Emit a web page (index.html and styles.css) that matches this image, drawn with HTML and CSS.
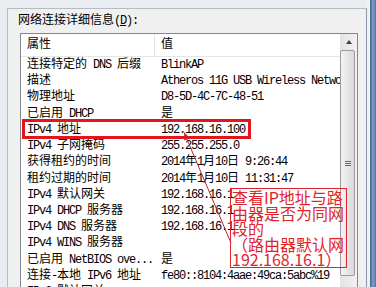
FILE: index.html
```html
<!DOCTYPE html>
<html lang="zh-CN">

<head>
    <meta charset="UTF-8">
    <title>网络连接详细信息</title>
    <link rel="stylesheet" href="styles.css">
</head>

<body>
    <div class="window">
        <div class="panel">
            <div class="title">网络连接详细信息<span class="en">(<u>D</u>):</span></div>
            <div class="listbox">
                <div class="list">
                    <div class="head">
                        <div class="hcell">属性</div>
                        <div class="hcell">值</div>
                    </div>
                    <div class="row"><div class="k">连接特定的<span class="en"> DNS </span>后缀</div><div class="v">BlinkAP</div></div>
                    <div class="row"><div class="k">描述</div><div class="v">Atheros 11G USB Wireless Network Adapter</div></div>
                    <div class="row"><div class="k">物理地址</div><div class="v">D8-5D-4C-7C-48-51</div></div>
                    <div class="row"><div class="k">已启用<span class="en"> DHCP</span></div><div class="v"><span class="cn">是</span></div></div>
                    <div class="row"><div class="k"><span class="en">IPv4 </span>地址</div><div class="v">192.168.16.100</div></div>
                    <div class="row"><div class="k"><span class="en">IPv4 </span>子网掩码</div><div class="v">255.255.255.0</div></div>
                    <div class="row"><div class="k">获得租约的时间</div><div class="v">2014<span class="cn">年</span>1<span class="cn">月</span>10<span class="cn">日</span> 9:26:44</div></div>
                    <div class="row"><div class="k">租约过期的时间</div><div class="v">2014<span class="cn">年</span>1<span class="cn">月</span>10<span class="cn">日</span> 11:31:47</div></div>
                    <div class="row"><div class="k"><span class="en">IPv4 </span>默认网关</div><div class="v">192.168.16.1</div></div>
                    <div class="row"><div class="k"><span class="en">IPv4 DHCP </span>服务器</div><div class="v">192.168.16.1</div></div>
                    <div class="row"><div class="k"><span class="en">IPv4 DNS </span>服务器</div><div class="v">192.168.16.1</div></div>
                    <div class="row"><div class="k"><span class="en">IPv4 WINS </span>服务器</div><div class="v"></div></div>
                    <div class="row"><div class="k">已启用<span class="en"> NetBIOS ove...</span></div><div class="v"><span class="cn">是</span></div></div>
                    <div class="row"><div class="k">连接<span class="en">-</span>本地<span class="en"> IPv6 </span>地址</div><div class="v">fe80::8104:4aae:49ca:5abc%19</div></div>
                    <div class="row"><div class="k"><span class="en">IPv6 </span>默认网关</div><div class="v"></div></div>
                </div>
                <div class="scrollbar">
                    <div class="btn"><span class="up"></span></div>
                    <div class="thumb"><span class="grip"></span></div>
                </div>
            </div>
        </div>
        <div class="edge"></div>

        <svg class="marks" width="376" height="287" viewBox="0 0 376 287">
            <rect x="23.5" y="120.5" width="226" height="17" fill="none" stroke="#e3161d" stroke-width="3" />
            <line x1="186" y1="137" x2="231" y2="243" stroke="#b8262c" stroke-width="1" />
            <polygon points="184,132 189.9,138.2 184.3,140.6" fill="#c8242a" />
        </svg>
        <div class="note">查看IP地址与路<br>由器是否为同网<br>段的<br>（路由器默认网<br>192.168.16.1）</div>
    </div>
</body>

</html>
```

FILE: styles.css
```css
body {
    margin: 0;
    font-family: "Liberation Mono", "Noto Sans CJK SC", monospace;
    font-size: 12px;
    color: #000;
}

.window {
    position: relative;
    display: flex;
    width: 376px;
    height: 287px;
    overflow: hidden;
    background: #e9edf1;
}

.panel {
    flex: 1;
    margin: 8px 0 0 7px;
    padding-top: 4px;
    background: #f0f0f0;
    border-top: 1px solid #b4bcc6;
    border-left: 1px solid #b4bcc6;
    border-right: 1px solid #8e98a4;
}

.edge {
    width: 9px;
    background: linear-gradient(90deg, #eef1f4 0, #eef1f4 3px, #3e5f8c 3px, #7f9fc8 6px, #4f73a3 9px);
}

.en {
    letter-spacing: -1.2px;
}

.cn {
    letter-spacing: 0;
}

.title {
    padding-left: 10px;
    line-height: 16px;
}

.listbox {
    display: flex;
    height: 300px;
    margin: 4px 8px 0 12px;
    background: #fff;
    border: 1px solid #828790;
}

.list {
    flex: 1;
    min-width: 0;
}

.head {
    display: grid;
    grid-template-columns: 133px 1fr;
    height: 22px;
    border-bottom: 1px solid #e5e5e5;
}

.hcell {
    padding-left: 6px;
    line-height: 22px;
}

.hcell + .hcell {
    border-left: 1px solid #e5e5e5;
}

.row {
    display: grid;
    grid-template-columns: 133px 1fr;
    height: 16.23px;
    line-height: 16.23px;
    white-space: nowrap;
}

.k {
    padding-left: 6px;
    overflow: hidden;
}

.v {
    padding-left: 7px;
    overflow: hidden;
    letter-spacing: -1.2px;
}

.scrollbar {
    display: flex;
    flex-direction: column;
    width: 17px;
    background: linear-gradient(90deg, #e3e3e3, #f1f1f1);
}

.btn {
    display: flex;
    align-items: center;
    justify-content: center;
    height: 16px;
}

.up {
    width: 0;
    height: 0;
    border-left: 3.5px solid transparent;
    border-right: 3.5px solid transparent;
    border-bottom: 4px solid #3c3c3c;
}

.thumb {
    display: flex;
    align-items: center;
    justify-content: center;
    height: 224px;
    margin: 0 2px 0 0;
    background: linear-gradient(90deg, #f4f4f4, #e6e6e6 50%, #d9d9d9);
    border: 1px solid #9b9b9b;
    border-radius: 2px;
}

.grip {
    width: 6px;
    height: 5px;
    background: repeating-linear-gradient(180deg, #6a6a6a 0, #6a6a6a 1px, transparent 1px, transparent 2px);
}

.marks {
    position: absolute;
    left: 0;
    top: 0;
}

.note {
    position: absolute;
    left: 230px;
    top: 188px;
    width: 114px;
    height: 77px;
    padding: 1px 0 0 1px;
    border: 1px solid #e0242c;
    color: #e0242c;
    font-family: "Noto Sans CJK SC", sans-serif;
    font-size: 16px;
    line-height: 15.5px;
    white-space: nowrap;
}
```
